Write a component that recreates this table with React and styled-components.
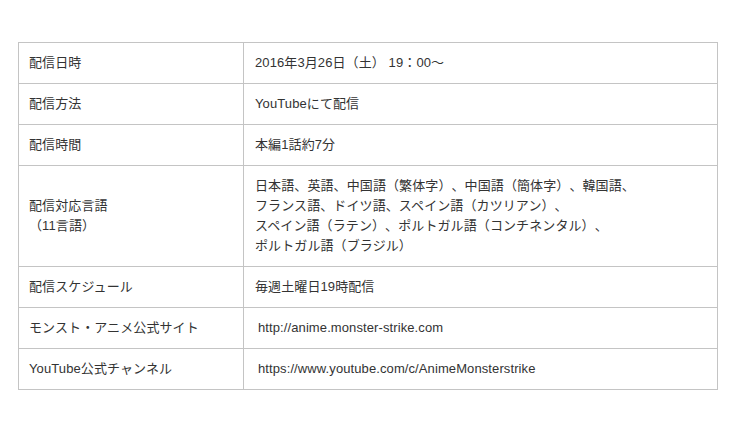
import styled, { createGlobalStyle } from "styled-components";

//styling

const GlobalStyle = createGlobalStyle`
  body {
    margin: 0;
    background: #fff;
    font-family: "Liberation Sans", Arial, "Noto Sans CJK JP", sans-serif;
  }
`;

const Page = styled.div`
  padding: 42px 22px 40px 18px;
`;

const Table = styled.table`
  width: 700px;
  border-collapse: collapse;
  font-size: 13px;
  line-height: 20px;
  letter-spacing: 0.1px;
  color: #333;
  text-spacing-trim: space-all;
  font-feature-settings: "palt" 0, "halt" 0;
`;

const Row = styled.tr``;

const LabelCell = styled.td`
  width: 204px;
  padding: 10px 10px;
  border: 1px solid #c4c4c4;
  vertical-align: middle;
`;

const ValueCell = styled.td`
  padding: 10px 11px;
  border: 1px solid #c4c4c4;
  vertical-align: middle;
`;

const Url = styled.span`
  margin-left: ${(p) => p.$indent || 3}px;
`;

//data

const rows = [
  { label: "配信日時", value: "2016年3月26日（土） 19：00～" },
  { label: "配信方法", value: "YouTubeにて配信" },
  { label: "配信時間", value: "本編1話約7分" },
  {
    label: ["配信対応言語", "（11言語）"],
    value: [
      "日本語、英語、中国語（繁体字）、中国語（簡体字）、韓国語、",
      "フランス語、ドイツ語、スペイン語（カツリアン）、",
      "スペイン語（ラテン）、ポルトガル語（コンチネンタル）、",
      "ポルトガル語（ブラジル）",
    ],
  },
  { label: "配信スケジュール", value: "毎週土曜日19時配信" },
  { label: "モンスト・アニメ公式サイト", url: "http://anime.monster-strike.com" },
  { label: "YouTube公式チャンネル", url: "https://www.youtube.com/c/AnimeMonsterstrike" },
];

const lines = (text) =>
  Array.isArray(text)
    ? text.map((t, i) => (
        <span key={i}>
          {i > 0 && <br />}
          {t}
        </span>
      ))
    : text;

//component

export default function App() {
  return (
    <>
      <GlobalStyle />
      <Page>
        <Table>
          <tbody>
            {rows.map((r, i) => (
              <Row key={i}>
                <LabelCell>{lines(r.label)}</LabelCell>
                <ValueCell>{r.url ? <Url>{r.url}</Url> : lines(r.value)}</ValueCell>
              </Row>
            ))}
          </tbody>
        </Table>
      </Page>
    </>
  );
}
